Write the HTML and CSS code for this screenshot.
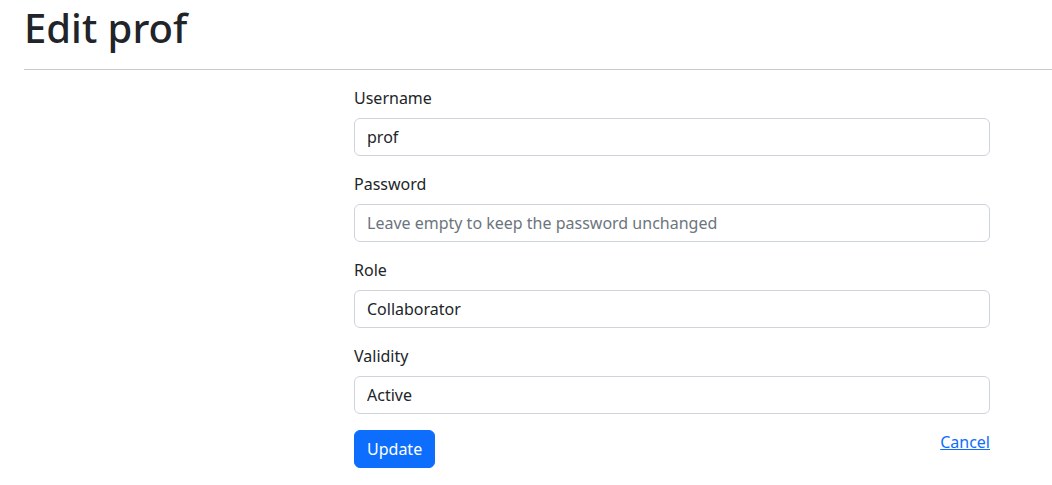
FILE: index.html
```html
<!DOCTYPE html>
<html lang="en">
<head>
<meta charset="utf-8">
<title>Edit prof</title>
<link rel="stylesheet" href="styles.css">
</head>
<body>
<header class="page-head">
  <h1 class="title">Edit prof</h1>
  <hr class="rule">
</header>
<main class="form-wrap">
  <form class="edit-form">
    <div class="field">
      <label class="field-label" for="username">Username</label>
      <input class="field-input" id="username" type="text" value="prof">
    </div>
    <div class="field">
      <label class="field-label" for="password">Password</label>
      <input class="field-input" id="password" type="password" placeholder="Leave empty to keep the password unchanged">
    </div>
    <div class="field">
      <label class="field-label" for="role">Role</label>
      <input class="field-input" id="role" type="text" value="Collaborator">
    </div>
    <div class="field">
      <label class="field-label" for="validity">Validity</label>
      <input class="field-input" id="validity" type="text" value="Active">
    </div>
    <div class="actions">
      <button class="btn-primary" type="button">Update</button>
      <a class="cancel" href="#">Cancel</a>
    </div>
  </form>
</main>
</body>
</html>
```

FILE: styles.css
```css
* { box-sizing: border-box; }

html, body {
  margin: 0;
  padding: 0;
  background: #ffffff;
}

body {
  font-family: "Noto Sans", "Open Sans", "Liberation Sans", sans-serif;
  font-size: 16px;
  line-height: 24px;
  color: #212529;
}

.page-head {
  padding: 4px 0 0 24px;
}

.title {
  margin: 0;
  font-size: 40px;
  line-height: 48px;
  font-weight: 500;
  color: #212529;
}

.rule {
  margin: 17px 0 16px 0;
  border: 0;
  border-top: 1px solid #c9cacb;
  height: 0;
}

.form-wrap {
  padding: 0 62px 0 354px;
}

.edit-form {
  display: flex;
  flex-direction: column;
  gap: 16px;
}

.field {
  display: flex;
  flex-direction: column;
  gap: 8px;
}

.field-label {
  display: block;
  font-size: 16px;
  line-height: 24px;
  color: #212529;
}

.field-input {
  display: block;
  width: 100%;
  height: 38px;
  padding: 6px 12px;
  font-family: inherit;
  font-size: 16px;
  line-height: 24px;
  color: #212529;
  background: #ffffff;
  border: 1px solid #ced4da;
  border-radius: 6px;
  outline: none;
}

.field-input::placeholder {
  color: #6c757d;
  opacity: 1;
}

.actions {
  display: flex;
  justify-content: space-between;
  align-items: flex-start;
}

.btn-primary {
  height: 38px;
  padding: 6px 12px;
  font-family: inherit;
  font-size: 16px;
  line-height: 24px;
  color: #ffffff;
  background: #0d6efd;
  border: 1px solid #0d6efd;
  border-radius: 6px;
}

.cancel {
  font-size: 16px;
  line-height: 24px;
  color: #0d6efd;
  text-decoration: underline;
}
```
